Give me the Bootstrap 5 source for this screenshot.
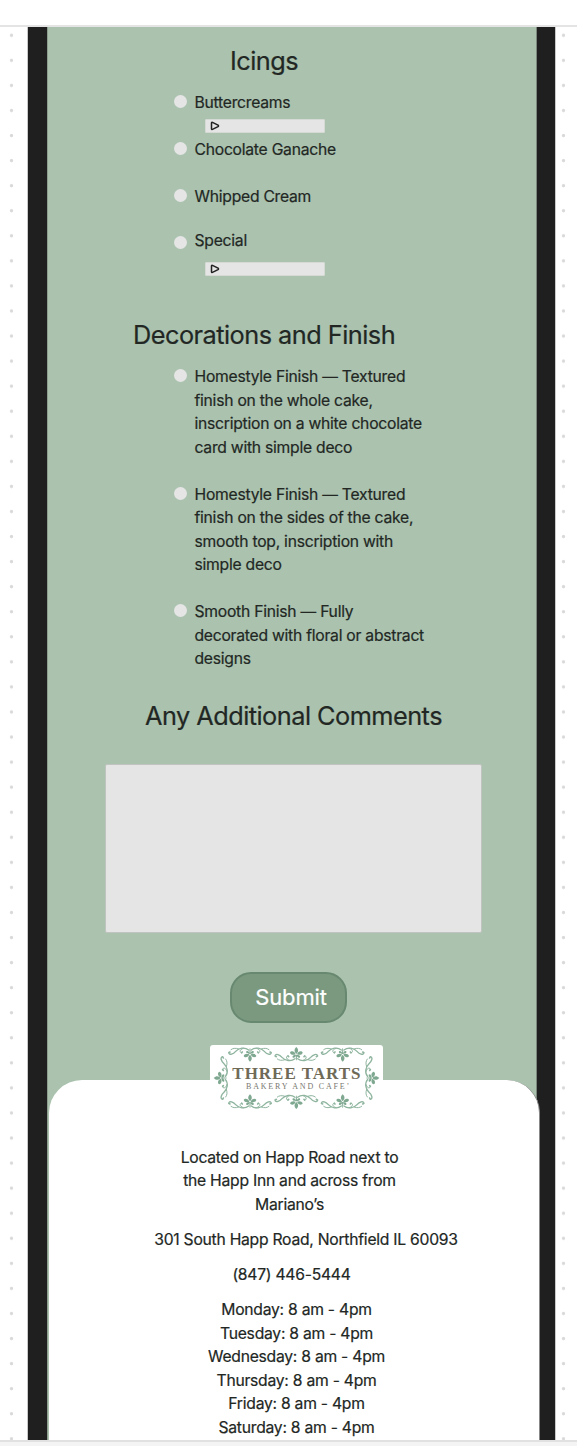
<!DOCTYPE html>
<html lang="en">
<head>
<meta charset="utf-8">
<meta name="viewport" content="width=device-width, initial-scale=1">
<title>Three Tarts – Cake order</title>
<link href="https://cdn.jsdelivr.net/npm/bootstrap@5.3.0/dist/css/bootstrap.min.css" rel="stylesheet">
<style>
body{font-family:Inter,"Liberation Sans",sans-serif;color:#222724;background:#fff;font-size:15.7px;line-height:23.5px;letter-spacing:-.25px;-webkit-text-stroke:.2px currentColor}
.page{height:1446px}
.topbar{height:27px;border-bottom:2px solid #e4e4e4}
.workspace{height:1413px}
.dots{width:27px;background:radial-gradient(circle at 11.5px 8.3px,#d9d9d9 1.2px,transparent 2.1px) 0 0/27px 25.07px}
.dots-end{width:21px;background-position:-4px 0}
.edge{border-left:1px solid #c9c9c9;border-right:1px solid #c9c9c9;width:529px}
.screen{width:527px;border:solid #1f1f1f;border-width:0 18px 0 19px;background:#aac2ae;box-shadow:inset 1px 0 #8d9d90,inset -1px 0 #7b877d}
.title{font-size:25.3px;line-height:32px;font-weight:400;letter-spacing:-.52px;margin:0;white-space:nowrap}
.t-icings{margin:18px 0 14px 183px}
.t-decor{margin:43px 0 14px 86px}
.t-comments{margin:29px 0 32px 98px}
.choices{margin-left:127px}
.choice{gap:7.5px;min-height:47px;white-space:nowrap}
.choice.special{margin-top:-3px}
.dot{width:13px;height:13px;border-radius:50%;background:#e5e5e5;margin-top:4px;flex:none}
.special .dot{margin-top:7px}
.picker{width:120px;height:14px;margin:4px 0 0 10px;background:#e5e5e5;border:1px solid #d5dad5;border-radius:1px;padding-left:4px}
.special .picker{margin-top:9px}
.finish{margin-bottom:23.5px}
.finish:last-child{margin-bottom:0}
.comments{width:377px;height:169px;margin-left:58px;background:#e5e5e5;border:1.5px solid #c0c4c0;border-radius:2px;resize:none;padding:8px}
.submit{width:117px;height:51px;margin:39px 0 0 183px;padding:0 0 0 5px;border:2px solid #688970;border-radius:21px;background:#7a997f;color:#fff;font-size:22px;letter-spacing:-.15px}
.brand{width:173px;height:67px;margin:22px 0 0 163px;position:relative;z-index:2;background:#fff;border-radius:3px}
.brand svg{display:block;-webkit-text-stroke:0}
.info{width:491px;height:361px;margin:-32px 0 0 1.5px;padding-top:66px;background:#fff;border-radius:33px 33px 0 0;position:relative;z-index:1;border-right:1px solid #888;white-space:nowrap}
.info p{margin:0 0 11.8px;width:310px}
.bottombar{height:6px;background:#f4f4f4;border-top:2px solid #e1e1e1}
</style>
</head>
<body>
<div class="page d-flex flex-column overflow-hidden">
  <header class="topbar flex-shrink-0"></header>
  <main class="workspace d-flex overflow-hidden flex-shrink-0">
    <div class="dots flex-shrink-0"></div>
    <div class="edge flex-shrink-0">
      <form class="screen h-100 d-flex flex-column align-items-start">
        <h2 class="title t-icings">Icings</h2>
        <div class="choices">
          <div class="choice d-flex"><span class="dot"></span><div>Buttercreams<div class="picker d-flex align-items-center"><svg width="10" height="10" viewBox="0 0 10 10"><path d="M1.5 2Q1.5 1 2.5 1.4L8 4.2Q9 4.9 8 5.6L2.5 8.4Q1.5 8.7 1.5 7.7Z" fill="none" stroke="#222" stroke-width="1.5"/></svg></div></div></div>
          <div class="choice d-flex"><span class="dot"></span><div>Chocolate Ganache</div></div>
          <div class="choice d-flex"><span class="dot"></span><div>Whipped Cream</div></div>
          <div class="choice special d-flex"><span class="dot"></span><div>Special<div class="picker d-flex align-items-center"><svg width="10" height="10" viewBox="0 0 10 10"><path d="M1.5 2Q1.5 1 2.5 1.4L8 4.2Q9 4.9 8 5.6L2.5 8.4Q1.5 8.7 1.5 7.7Z" fill="none" stroke="#222" stroke-width="1.5"/></svg></div></div></div>
        </div>
        <h2 class="title t-decor">Decorations and Finish</h2>
        <div class="choices">
          <div class="choice finish d-flex"><span class="dot"></span><div>Homestyle Finish — Textured<br>finish on the whole cake,<br>inscription on a white chocolate<br>card with simple deco</div></div>
          <div class="choice finish d-flex"><span class="dot"></span><div>Homestyle Finish — Textured<br>finish on the sides of the cake,<br>smooth top, inscription with<br>simple deco</div></div>
          <div class="choice finish d-flex"><span class="dot"></span><div>Smooth Finish — Fully<br>decorated with floral or abstract<br>designs</div></div>
        </div>
        <h2 class="title t-comments">Any Additional Comments</h2>
        <textarea class="comments d-block flex-shrink-0" aria-label="Comments"></textarea>
        <button type="button" class="btn submit flex-shrink-0">Submit</button>
        <div class="brand flex-shrink-0">
          <svg width="173" height="67" viewBox="30 32 519 201">
            <defs>
              <g id="half" fill="none" stroke="#8fb59f" stroke-linecap="round">
                <path stroke-width="4" d="M4 12C16 22 34 18 43 8C50 0 62-5 64 4"/>
                <path stroke-width="5" d="M62 5L60 6"/>
                <path stroke-width="3" d="M20 17C31 14 33 5 25 3"/>
                <path stroke-width="5" d="M25 4L23 6"/>
                <path stroke-width="3" d="M34 15C44 19 52 17 57 13"/>
              </g>
              <g id="scroll">
                <use href="#half"/><use href="#half" transform="scale(-1 1)"/>
                <g fill="#7fa890">
                  <path d="M0-23C9-14 5-7 0-2C-5-7-9-14 0-23Z"/>
                  <path d="M2-1C5-12 17-12 19-6C17 1 8 2 2-1Z"/>
                  <path d="M-2-1C-5-12-17-12-19-6C-17 1-8 2-2-1Z"/>
                  <path d="M1 1C10 0 14 6 10 9C5 10 2 6 1 1ZM-1 1C-10 0-14 6-10 9C-5 10-2 6-1 1Z"/>
                  <path d="M-2 0H2L1 17H-1Z"/>
                </g>
              </g>
            </defs>
            <use href="#scroll" transform="translate(150 59) rotate(180)"/>
            <use href="#scroll" transform="translate(289 61)"/>
            <use href="#scroll" transform="translate(428 59) rotate(180)"/>
            <use href="#scroll" transform="translate(150 203)"/>
            <use href="#scroll" transform="translate(289 201) rotate(180)"/>
            <use href="#scroll" transform="translate(428 203)"/>
            <use href="#scroll" transform="translate(64 131) rotate(-90)"/>
            <use href="#scroll" transform="translate(515 131) rotate(90)"/>
            <text x="97" y="134" textLength="384" font-family="Liberation Serif,serif" font-weight="700" font-size="51" fill="#6f6a57">THREE TARTS</text>
            <text x="138" y="164" textLength="309" font-family="Liberation Serif,serif" font-size="24" fill="#77776f">BAKERY AND CAFE’</text>
          </svg>
        </div>
        <footer class="info text-center flex-shrink-0">
          <p style="margin-left:86px">Located on Happ Road next to<br>the Happ Inn and across from<br>Mariano’s</p>
          <p style="margin-left:102.5px">301 South Happ Road, Northfield IL 60093</p>
          <p style="margin-left:88px">(847) 446-5444</p>
          <p style="margin-left:93px">Monday: 8 am - 4pm<br>Tuesday: 8 am - 4pm<br>Wednesday: 8 am - 4pm<br>Thursday: 8 am - 4pm<br>Friday: 8 am - 4pm<br>Saturday: 8 am - 4pm</p>
        </footer>
      </form>
    </div>
    <div class="dots dots-end flex-shrink-0"></div>
  </main>
  <footer class="bottombar flex-shrink-0"></footer>
</div>
<script src="https://cdn.jsdelivr.net/npm/bootstrap@5.3.0/dist/js/bootstrap.bundle.min.js"></script>
</body>
</html>
